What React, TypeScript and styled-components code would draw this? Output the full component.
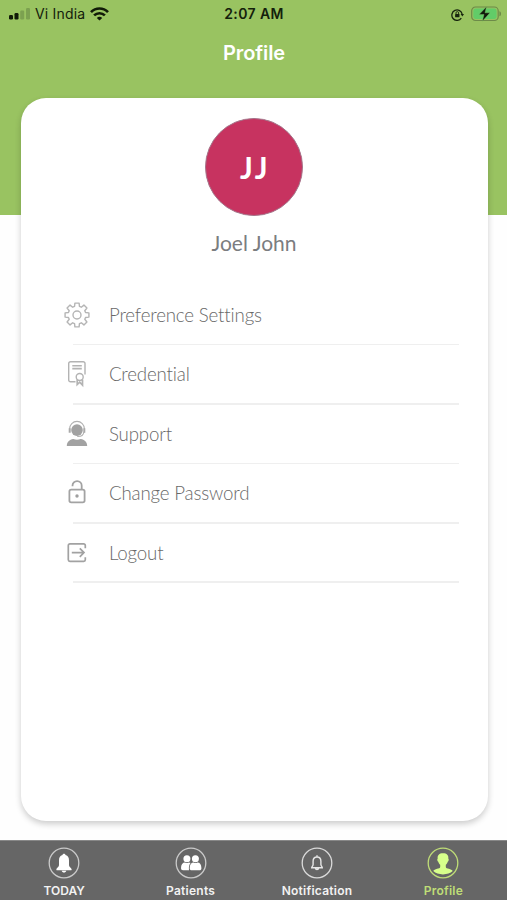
import React from "react";
import styled, { createGlobalStyle } from "styled-components";

const GlobalStyle = createGlobalStyle`
  * { box-sizing: border-box; }
  body { margin: 0; background: #fefefe; }
  svg { display: block; flex: none; }
`;

const Screen = styled.div`
  width: 507px;
  height: 900px;
  display: flex;
  flex-direction: column;
  overflow: hidden;
  background: linear-gradient(#99c361 0 215.5px, #fefefe 215.5px);
  font-family: Inter, "Liberation Sans", sans-serif;
`;

const StatusBar = styled.header`
  height: 28px;
  display: grid;
  grid-template-columns: 1fr auto 1fr;
  align-items: center;
  padding: 0 6px 0 9px;
  color: #14200b;
`;

const StatusGroup = styled.div<{ $end?: boolean }>`
  display: flex;
  align-items: center;
  justify-content: ${(p) => (p.$end ? "flex-end" : "flex-start")};
  gap: ${(p) => (p.$end ? 7 : 5)}px;
`;

const Carrier = styled.span`
  font-size: 14px;
  line-height: 18px;
  letter-spacing: 0.18px;
`;

const Clock = styled.time`
  font-size: 14px;
  line-height: 18px;
  font-weight: 600;
  letter-spacing: 0.4px;
  margin-right: 2px;
`;

const Title = styled.h1`
  margin: 0;
  height: 70px;
  padding: 12px 0 0 1px;
  text-align: center;
  font-size: 20px;
  line-height: 26px;
  font-weight: 600;
  letter-spacing: -0.1px;
  color: #fff;
`;

const Card = styled.main`
  width: 467px;
  height: 723px;
  margin-left: 20.5px;
  padding-top: 20px;
  border-radius: 25px;
  background: #fff;
  box-shadow: 0 3px 6px rgba(0, 0, 0, 0.2);
  display: flex;
  flex-direction: column;
  align-items: center;
  font-family: Lato, sans-serif;
`;

const Avatar = styled.div`
  width: 98px;
  height: 98px;
  border-radius: 50%;
  border: 1px solid #a3758a;
  background: #c73360;
  color: #fff;
  display: flex;
  align-items: center;
  justify-content: center;
  padding-left: 2px;
  font-size: 30px;
  font-weight: 700;
  letter-spacing: 2.4px;
`;

const Name = styled.h2`
  margin: 13px 0 0;
  font-size: 21px;
  line-height: 28px;
  font-weight: 400;
  color: #7b7d80;
`;

const Menu = styled.ul`
  list-style: none;
  margin: 29px 0 0;
  padding: 0;
  width: 100%;
`;

const MenuRow = styled.li`
  height: 59.4px;
  padding-left: 41.5px;
  padding-right: 29px;
  display: grid;
  grid-template-columns: 30px 1fr;
  grid-template-rows: 1fr 1.5px;
  column-gap: 17px;
  align-items: center;
  color: #9c9c9c;
`;

const MenuLabel = styled.span`
  font-size: 18.7px;
  line-height: 26px;
  font-weight: 300;
  letter-spacing: -0.17px;
  color: #696969;
`;

const Divider = styled.span`
  grid-column: 1 / -1;
  height: 1.5px;
  margin-left: 11px;
  background: #efefef;
`;

const TabBar = styled.nav`
  height: 60px;
  margin-top: 19px;
  display: grid;
  grid-template-columns: repeat(4, 126.4px);
  background: #666;
  border-top: 1px solid #888;
`;

const Tab = styled.button<{ $active?: boolean }>`
  border: 0;
  background: none;
  padding: 6px 0 0 2px;
  display: flex;
  flex-direction: column;
  align-items: center;
  gap: 4px;
  color: ${(p) => (p.$active ? "#bfdd77" : "#f2f2f2")};
`;

const TabLabel = styled.span<{ $spacing?: number }>`
  font-family: Inter, sans-serif;
  font-size: 12px;
  line-height: 16px;
  font-weight: 600;
  letter-spacing: ${(p) => p.$spacing ?? 0.25}px;
`;

const SignalIcon = () => (
  <svg width="21" height="12" viewBox="0 0 21 12">
    <rect x="0" y="7" width="4" height="4.5" rx="1.2" fill="#111b08" />
    <rect x="5.5" y="5" width="4" height="6.5" rx="1.2" fill="#111b08" />
    <rect x="11.2" y="2.5" width="4" height="9" rx="1.2" fill="#7ca150" />
    <rect x="17" y="0" width="4" height="11.5" rx="1.2" fill="#7ca150" />
  </svg>
);

const WifiIcon = () => (
  <svg width="19" height="14" viewBox="0 0 19 14" fill="none" stroke="#111b08" strokeWidth="2.7">
    <path d="M1 5.1C5.8.3 13.2.3 18 5.1" />
    <path d="M4.1 8.4c3-2.9 7.8-2.9 10.8 0" />
    <path d="M6.8 10.9c1.5-1.4 3.9-1.4 5.4 0L9.5 13.6z" fill="#111b08" stroke="none" />
  </svg>
);

const RotationLockIcon = () => (
  <svg width="13" height="13" viewBox="0 0 13 13" fill="none" stroke="#18260e">
    <path d="M10.3 10.2A5.2 5.2 0 1 1 11.2 6.4" strokeWidth="1.3" />
    <path d="M9.6 6h3.4l-1.6 2.6z" fill="#18260e" stroke="none" />
    <rect x="4.1" y="5.9" width="4.4" height="3.3" rx=".5" fill="#18260e" stroke="none" />
    <path d="M5 6V4.9a1.3 1.3 0 0 1 2.6 0V6" strokeWidth=".9" />
  </svg>
);

const BatteryIcon = () => (
  <svg width="30" height="17" viewBox="0 0 30 17">
    <rect x=".7" y="1" width="26.5" height="13.5" rx="3.8" fill="none" stroke="#6d8a49" strokeWidth="1.2" />
    <rect x="2.3" y="2.6" width="23.3" height="10.3" rx="2.3" fill="#62cc68" />
    <path d="M28.4 5.3c2.2.8 2.2 4.3 0 5z" fill="#6d8a49" />
    <path d="M15.5.7 8.1 8.5h4.9l-1.7 6.7L19 6.8h-5z" fill="#10190b" stroke="#7fc66a" strokeWidth=".4" />
  </svg>
);

const gearPath = (() => {
  const points: string[] = [];
  for (let i = 0; i < 8; i++) {
    [[-16, 8.9], [-10, 12.1], [10, 12.1], [16, 8.9]].forEach(([d, r]) => {
      const a = ((i * 45 + d - 90) * Math.PI) / 180;
      points.push(`${(15 + r * Math.cos(a)).toFixed(2)} ${(15 + r * Math.sin(a)).toFixed(2)}`);
    });
  }
  return `M${points.join("L")}Z`;
})();

const GearIcon = () => (
  <svg width="30" height="30" viewBox="0 0 30 30" fill="none" stroke="#b5b5b5" strokeWidth="1.4" strokeLinejoin="round">
    <path d={gearPath} />
    <circle cx="15" cy="15" r="4" />
  </svg>
);

const CredentialIcon = () => (
  <svg width="30" height="30" viewBox="0 0 30 30" fill="none" stroke="#b3b3b3" strokeWidth="1.4">
    <path d="M13.5 22.7H8.5a1.8 1.8 0 0 1-1.8-1.8V4.5a1.8 1.8 0 0 1 1.8-1.8h12.7A1.8 1.8 0 0 1 23 4.5v11" />
    <path d="M10.3 6.8h9.5M10.3 9.6h9.5" strokeWidth="1.6" />
    <circle cx="17.7" cy="18" r="3.5" />
    <path d="M15.2 20.4v5.2l2.5-2.4 2.8 3v-5.6" strokeWidth="1.7" />
  </svg>
);

const SupportIcon = () => (
  <svg width="30" height="30" viewBox="0 0 30 30">
    <circle cx="15" cy="11.1" r="5.8" fill="#a2a2a2" />
    <path d="M7.6 11v-1.2a7.4 7.4 0 0 1 14.8 0V11M22 12.8c-.7 3.7-3.2 5-6.8 4.7" fill="none" stroke="#b2b2b2" strokeWidth="1.1" />
    <path d="M7.7 9.2v4.5M22.3 9.2v4.5" stroke="#a9a9a9" strokeWidth="2" />
    <path d="M4.8 27c0-3.8 2.6-6.5 6.5-7 2.5.9 4.9.9 7.4 0 3.9.5 6.5 3.2 6.5 7z" fill="#a2a2a2" />
  </svg>
);

const UnlockIcon = () => (
  <svg width="30" height="30" viewBox="0 0 30 30" fill="none" stroke="#a3a3a3" strokeWidth="1.8">
    <rect x="7.4" y="11.6" width="15.2" height="12.8" rx="1.8" />
    <path d="M10.5 8.2v-.5a4.6 4.6 0 0 1 9.2 0v3.9" />
    <circle cx="15" cy="18" r="1.7" fill="#9f9f9f" stroke="none" />
  </svg>
);

const LogoutIcon = () => (
  <svg width="30" height="30" viewBox="0 0 30 30" fill="none" stroke="#a2a2a2" strokeWidth="1.7">
    <path d="M23.3 10.2V7.5A1.6 1.6 0 0 0 21.7 5.9H7.9A1.6 1.6 0 0 0 6.3 7.5v14.2a1.6 1.6 0 0 0 1.6 1.6h13.8a1.6 1.6 0 0 0 1.6-1.6v-2.5" />
    <path d="M9.8 14.6h12.2M17.8 10.3l4.2 4.3-4.2 4.3" />
  </svg>
);

const TabRing = ({ color, children }: { color: string; children: React.ReactNode }) => (
  <svg width="32" height="32" viewBox="0 0 32 32">
    <circle cx="16" cy="16" r="14.8" fill="none" stroke={color} strokeWidth="1.3" />
    {children}
  </svg>
);

const TodayIcon = () => (
  <TabRing color="#cacaca">
    <path d="M16 6.7c-.9 0-1.5.6-1.5 1.4C11.9 8.7 11 11 11 13.5v4.7c0 1.8-2.7 3-2.7 4.2 0 .6.4.9 1 .9h13.4c.6 0 1-.3 1-.9 0-1.2-2.7-2.4-2.7-4.2v-4.7c0-2.5-.9-4.8-3.5-5.4 0-.8-.6-1.4-1.5-1.4zM13.7 23.7h4.6c-.4 2.4-4.2 2.4-4.6 0z" fill="#fff" />
  </TabRing>
);

const PatientsIcon = () => (
  <TabRing color="#cacaca">
    <g fill="#fff">
      <circle cx="11.9" cy="11.8" r="3.5" />
      <path d="M6 21.2c0-3.8 1.6-5.8 4.1-5.8 1.2.8 2.4.8 3.7 0 .8.1 1.4.3 1.8.7-1.5 1.6-1.9 3.8-1.6 7.2H8a2 2 0 0 1-2-2.1z" />
      <circle cx="20.4" cy="11.8" r="3.5" />
      <path d="M14.7 21.2c0-3.8 1.5-5.8 4-5.8 1.2.8 2.4.8 3.7 0 2.5 0 4 2 4 5.8 0 1.5-.7 2.1-2 2.1h-7.7c-1.3 0-2-.6-2-2.1z" />
    </g>
  </TabRing>
);

const NotificationIcon = () => (
  <TabRing color="#dadada">
    <path d="M16 10c-2.9 0-3.9 2-3.9 4.3v3.2c0 1.5-1.4 2.1-1.4 3.2h10.6c0-1.1-1.4-1.7-1.4-3.2v-3.2c0-2.3-1-4.3-3.9-4.3zM16 8.2V10M14.3 21c.4 2 3 2 3.4 0" fill="none" stroke="#e7e7e7" strokeWidth="1.4" />
  </TabRing>
);

const ProfileIcon = () => (
  <TabRing color="#bfdd77">
    <path d="M16 6.2c-3.9 0-5.7 2-5.3 5.4-.9.5-.3 3 .6 3.2.4 1.5 1 2.4 1.9 3v2.1c0 2.1-6 1.4-6.9 4.2C8.6 26.4 12 27.4 16 27.4s7.4-1 9.7-3.3c-.9-2.8-6.9-2.1-6.9-4.2v-2.1c.9-.6 1.5-1.5 1.9-3 .9-.2 1.5-2.7.6-3.2.4-3.4-1.4-5.4-5.3-5.4z" fill="#d7ff8b" />
  </TabRing>
);

const menuItems = [
  { label: "Preference Settings", Icon: GearIcon },
  { label: "Credential", Icon: CredentialIcon },
  { label: "Support", Icon: SupportIcon },
  { label: "Change Password", Icon: UnlockIcon },
  { label: "Logout", Icon: LogoutIcon },
];

const tabs = [
  { label: "TODAY", Icon: TodayIcon, spacing: 0 },
  { label: "Patients", Icon: PatientsIcon },
  { label: "Notification", Icon: NotificationIcon },
  { label: "Profile", Icon: ProfileIcon, active: true },
];

export default function App() {
  return (
    <>
      <GlobalStyle />
      <Screen>
        <StatusBar>
          <StatusGroup>
            <SignalIcon />
            <Carrier>Vi India</Carrier>
            <WifiIcon />
          </StatusGroup>
          <Clock>2:07 AM</Clock>
          <StatusGroup $end>
            <RotationLockIcon />
            <BatteryIcon />
          </StatusGroup>
        </StatusBar>
        <Title>Profile</Title>
        <Card>
          <Avatar>JJ</Avatar>
          <Name>Joel John</Name>
          <Menu>
            {menuItems.map(({ label, Icon }) => (
              <MenuRow key={label}>
                <Icon />
                <MenuLabel>{label}</MenuLabel>
                <Divider />
              </MenuRow>
            ))}
          </Menu>
        </Card>
        <TabBar>
          {tabs.map(({ label, Icon, active, spacing }) => (
            <Tab key={label} $active={active}>
              <Icon />
              <TabLabel $spacing={spacing}>{label}</TabLabel>
            </Tab>
          ))}
        </TabBar>
      </Screen>
    </>
  );
}
